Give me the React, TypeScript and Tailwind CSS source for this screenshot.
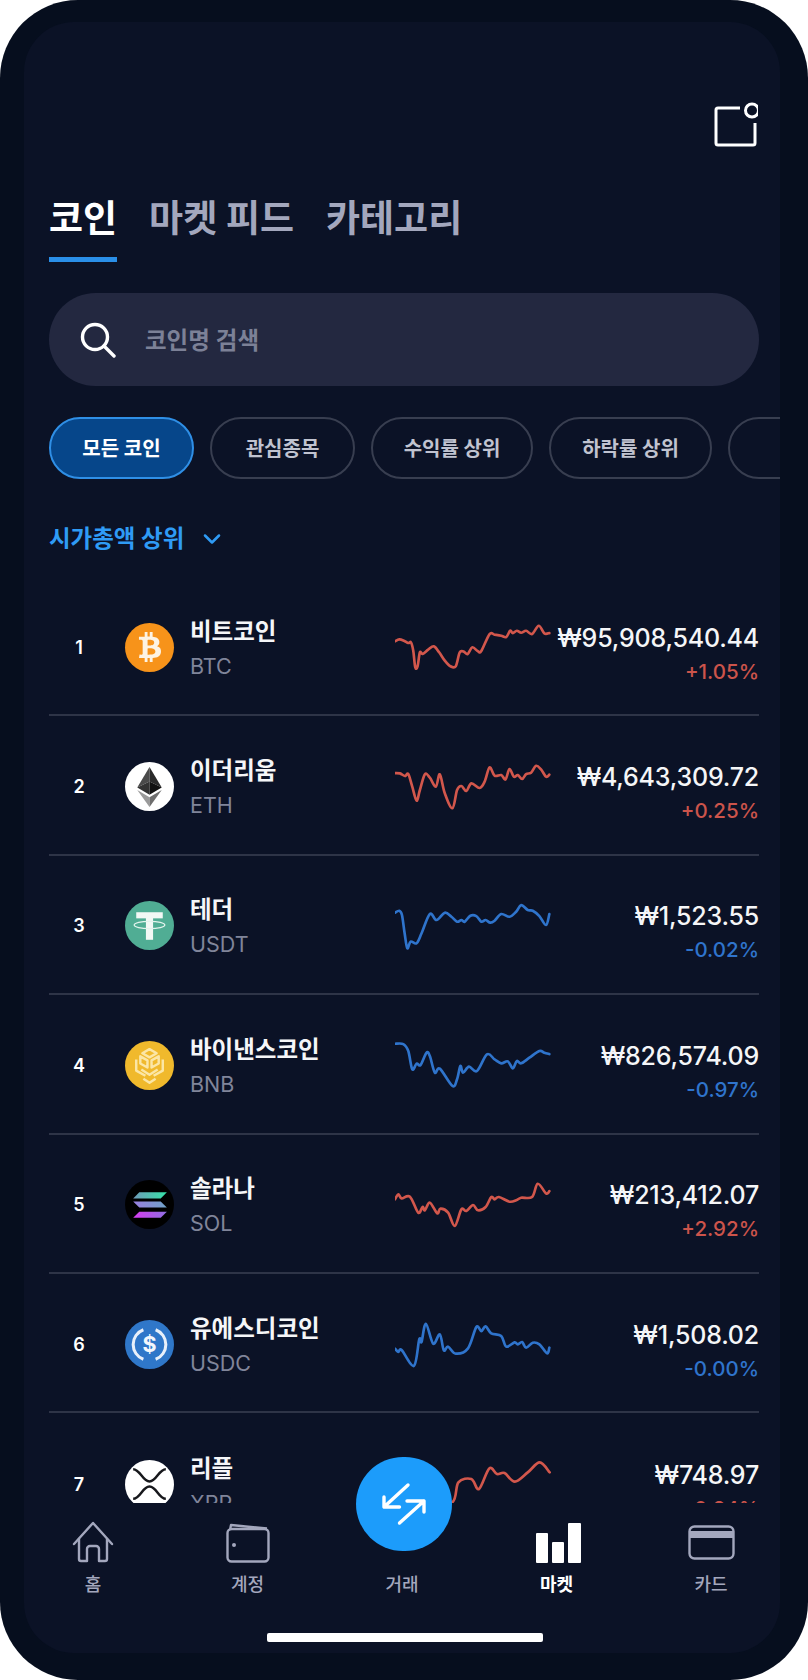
import { ChevronDown } from "lucide-react";
import { FaBtc } from "react-icons/fa";
import type { ReactNode } from "react";

const RED = "#d2574c";
const BLUE = "#2f74cc";

// turn "x,y x,y ..." into a smooth catmull-rom path
function smoothPath(line: string): string {
  const p = line.split(" ").map((s) => s.split(",").map(Number));
  let d = `M${p[0][0]} ${p[0][1]}`;
  for (let i = 0; i < p.length - 1; i++) {
    const a = p[Math.max(i - 1, 0)];
    const b = p[i];
    const c = p[i + 1];
    const e = p[Math.min(i + 2, p.length - 1)];
    const c1x = b[0] + (c[0] - a[0]) / 6;
    const c1y = b[1] + (c[1] - a[1]) / 6;
    const c2x = c[0] - (e[0] - b[0]) / 6;
    const c2y = c[1] - (e[1] - b[1]) / 6;
    d += `C${c1x} ${c1y} ${c2x} ${c2y} ${c[0]} ${c[1]}`;
  }
  return d;
}

function BtcIcon() {
  return (
    <div className="flex h-[49px] w-[49px] items-center justify-center rounded-full bg-[#f7931a]">
      <FaBtc className="h-[30px] w-[30px] text-[#fdf3e3]" />
    </div>
  );
}

function EthIcon() {
  return (
    <svg viewBox="0 0 48 48" className="h-[49px] w-[49px]">
      <circle cx="24" cy="24" r="24" fill="#fff" />
      <polygon points="24,5 12,25 24,19" fill="#4a4a4a" />
      <polygon points="24,5 36,25 24,19" fill="#2a2a2a" />
      <polygon points="12,25 24,19 24,32" fill="#333" />
      <polygon points="36,25 24,19 24,32" fill="#111" />
      <polygon points="12,27.5 24,44 24,34.5" fill="#9a9a9a" />
      <polygon points="36,27.5 24,44 24,34.5" fill="#6e6e6e" />
    </svg>
  );
}

function UsdtIcon() {
  return (
    <svg viewBox="0 0 48 48" className="h-[49px] w-[49px]">
      <circle cx="24" cy="24" r="24" fill="#50ad94" />
      <rect x="11" y="11" width="26" height="6" fill="#f2f8f5" />
      <rect x="20.5" y="15" width="7" height="23" fill="#f2f8f5" />
      <ellipse cx="24" cy="23.5" rx="15" ry="3.6" fill="none" stroke="#e3f3ed" strokeWidth="1.2" />
    </svg>
  );
}

function BnbIcon() {
  return (
    <svg viewBox="0 0 48 48" className="h-[49px] w-[49px]">
      <circle cx="24" cy="24" r="24" fill="#f0b92c" />
      <g fill="none" stroke="#fbe6a6" strokeWidth="2.4" strokeLinejoin="round">
        <polygon points="24,8 31,12 24,16 17,12" />
        <polygon points="15,15 22,19 22,26 15,22" />
        <polygon points="33,15 26,19 26,26 33,22" />
        <polyline points="11,18 11,29 20,34" />
        <polyline points="37,18 37,29 28,34" />
        <polyline points="16,28 24,33 32,28" />
        <polyline points="18,37 24,41 30,37" />
      </g>
    </svg>
  );
}

function SolIcon() {
  return (
    <svg viewBox="0 0 48 48" className="h-[49px] w-[49px]">
      <defs>
        <linearGradient id="sol-a" x1="0" x2="1" y1="0" y2="0">
          <stop offset="0" stopColor="#6f9bb8" />
          <stop offset="1" stopColor="#35e3a8" />
        </linearGradient>
        <linearGradient id="sol-b" x1="0" x2="1" y1="0" y2="0">
          <stop offset="0" stopColor="#9a7fe0" />
          <stop offset="1" stopColor="#6fa3c8" />
        </linearGradient>
        <linearGradient id="sol-c" x1="0" x2="1" y1="0" y2="0">
          <stop offset="0" stopColor="#d63cf0" />
          <stop offset="1" stopColor="#8f6fe0" />
        </linearGradient>
      </defs>
      <circle cx="24" cy="24" r="24" fill="#000" />
      <polygon points="14,12 41,12 35,18 8,18" fill="url(#sol-a)" />
      <polygon points="8,21 35,21 41,27 14,27" fill="url(#sol-b)" />
      <polygon points="14,31 41,31 35,37 8,37" fill="url(#sol-c)" />
    </svg>
  );
}

function UsdcIcon() {
  return (
    <svg viewBox="0 0 48 48" className="h-[49px] w-[49px]">
      <circle cx="24" cy="24" r="24" fill="#2f77c9" />
      <path d="M18 9.5a15.5 15.5 0 0 0 0 29M30 9.5a15.5 15.5 0 0 1 0 29" fill="none" stroke="#e8f0fa" strokeWidth="3" />
      <text x="24" y="31" textAnchor="middle" fontSize="21" fontWeight="700" fill="#f3f7fc" fontFamily="Inter, sans-serif">
        $
      </text>
    </svg>
  );
}

function XrpIcon() {
  return (
    <svg viewBox="0 0 48 48" className="h-[49px] w-[49px]">
      <circle cx="24" cy="24" r="24" fill="#fff" />
      <path
        d="M8 9C15 9 17 21 24 21C31 21 33 9 40 9M8 38C15 38 17 26 24 26C31 26 33 38 40 38"
        fill="none"
        stroke="#17181c"
        strokeWidth="2.4"
      />
    </svg>
  );
}

interface Coin {
  rank: number;
  name: string;
  symbol: string;
  price: string;
  change: string;
  up: boolean;
  cy: number;
  icon: ReactNode;
  line: string;
}

const coins: Coin[] = [
  {
    rank: 1,
    name: "비트코인",
    symbol: "BTC",
    price: "₩95,908,540.44",
    change: "+1.05%",
    up: true,
    cy: 114,
    icon: <BtcIcon />,
    line: "45,97 58,91 72,95 85,102 93,100 100,125 106,175 113,172 120,130 128,135 145,122 162,112 178,130 195,155 212,172 228,172 240,130 252,128 264,135 278,115 295,127 305,126 330,75 345,77 365,80 380,84 392,65 400,72 412,65 425,71 440,65 458,75 478,50 495,73 510,72",
  },
  {
    rank: 2,
    name: "이더리움",
    symbol: "ETH",
    price: "₩4,643,309.72",
    change: "+0.25%",
    up: true,
    cy: 531,
    icon: <EthIcon />,
    line: "45,489 60,490 75,498 85,492 97,530 110,572 120,540 135,493 150,503 168,530 180,493 195,550 218,595 232,540 245,528 260,543 275,520 300,534 315,515 330,472 345,497 365,495 378,508 390,477 403,500 415,495 428,507 440,492 455,488 470,467 485,478 500,500 510,494",
  },
  {
    rank: 3,
    name: "테더",
    symbol: "USDT",
    price: "₩1,523.55",
    change: "-0.02%",
    up: false,
    cy: 108,
    icon: <UsdtIcon />,
    line: "45,68 58,62 66,75 74,130 82,175 92,155 110,160 125,130 150,72 170,90 195,68 215,80 232,95 245,90 255,95 272,77 290,78 305,95 318,90 332,98 345,92 365,72 390,80 410,65 425,45 445,60 460,62 480,78 500,105 510,72",
  },
  {
    rank: 4,
    name: "바이낸스코인",
    symbol: "BNB",
    price: "₩826,574.09",
    change: "-0.97%",
    up: false,
    cy: 527,
    icon: <BnbIcon />,
    line: "45,463 70,464 85,485 97,540 110,523 122,527 140,490 150,500 165,550 180,538 218,590 232,570 242,530 250,550 268,532 292,545 322,495 345,510 365,522 385,516 400,537 412,515 425,522 450,505 480,485 495,490 510,494",
  },
  {
    rank: 5,
    name: "솔라나",
    symbol: "SOL",
    price: "₩213,412.07",
    change: "+2.92%",
    up: true,
    cy: 102,
    icon: <SolIcon />,
    line: "45,85 55,70 65,82 90,77 115,125 128,108 135,118 150,95 172,127 182,113 205,125 225,165 245,115 260,120 280,102 295,118 318,108 335,78 345,85 358,78 390,92 410,88 425,80 458,78 475,38 500,67 510,60",
  },
  {
    rank: 6,
    name: "유에스디코인",
    symbol: "USDC",
    price: "₩1,508.02",
    change: "-0.00%",
    up: false,
    cy: 519,
    icon: <UsdcIcon />,
    line: "45,533 55,543 65,537 102,585 118,505 125,513 138,458 160,518 180,490 192,538 205,527 228,548 265,532 290,468 305,480 318,466 335,487 365,495 380,527 405,514 415,520 428,513 440,530 460,515 480,520 503,547 510,530",
  },
  {
    rank: 7,
    name: "리플",
    symbol: "XRP",
    price: "₩748.97",
    change: "+0.24%",
    up: true,
    cy: 938,
    icon: <XrpIcon />,
    line: "45,970 100,950 150,1000 218,990 236,930 275,920 298,950 329,888 352,905 375,902 406,928 445,900 481,870 511,900",
  },
];

const chips = [
  { label: "모든 코인", width: "w-[145px]", active: true },
  { label: "관심종목", width: "w-[145px]", active: false },
  { label: "수익률 상위", width: "w-[162px]", active: false },
  { label: "하락률 상위", width: "w-[163px]", active: false },
  { label: "", width: "w-[120px]", active: false },
];

function CoinRow({ coin }: { coin: Coin }) {
  return (
    <div className="flex h-[139.4px] shrink-0 items-center border-b-2 border-[#2e3447] last:border-b-0">
      <div className="mt-[3px] w-[60px] text-center text-[18px] font-semibold text-white">{coin.rank}</div>
      <div className="ml-4 mt-[3px] shrink-0">{coin.icon}</div>
      <div className="ml-[16px] mt-[6px] w-[205px]">
        <div className="text-[23.5px] leading-[35px] font-semibold text-[#f5f6f8]">{coin.name}</div>
        <div className="text-[21.5px] leading-[35px] text-[#80859a]">{coin.symbol}</div>
      </div>
      <svg viewBox={`45 ${coin.cy - 90} 470 180`} className="mt-[3px] h-[60px] w-[156px] shrink-0">
        <path
          d={smoothPath(coin.line)}
          fill="none"
          stroke={coin.up ? RED : BLUE}
          strokeWidth="8"
          strokeLinejoin="round"
          strokeLinecap="round"
        />
      </svg>
      <div className="mt-[18px] flex-1 text-right">
        <div className="text-[25px] leading-[33px] font-medium whitespace-nowrap tracking-[-0.2px] text-[#f5f6f8]">{coin.price}</div>
        <div className={`text-[20.5px] leading-[33px] font-medium ${coin.up ? "text-[#cc544b]" : "text-[#2f74cc]"}`}>
          {coin.change}
        </div>
      </div>
    </div>
  );
}

function NavItem({ label, active, children }: { label: string; active?: boolean; children?: ReactNode }) {
  return (
    <div className="flex w-[100px] flex-col items-center">
      <div className="flex h-[62px] items-end pb-[2px]">{children}</div>
      <div className={`mt-[7px] text-[18px] leading-[26px] ${active ? "font-bold text-white" : "font-medium text-[#a3a7bd]"}`}>
        {label}
      </div>
    </div>
  );
}

export default function App() {
  return (
    <div className="h-[1680px] w-[808px] bg-white font-['Inter','Noto_Sans_CJK_KR',sans-serif]">
      <div className="h-full rounded-[78px] bg-[#060e1e] pb-[27px] pl-6 pt-[22px]">
        <div className="relative flex h-full w-[756px] flex-col overflow-hidden rounded-[50px] bg-[#0b1226]">
          {/* Top bar */}
          <div className="flex justify-end pr-[22px] pt-[80px]">
            <svg viewBox="0 0 44 46" className="h-[46px] w-[44px]" fill="none" stroke="#fff" strokeWidth="3">
              <path d="M26 6H4a2 2 0 0 0-2 2V41a2 2 0 0 0 2 2H39a2 2 0 0 0 2-2V21" />
              <circle cx="38" cy="8.5" r="6.5" />
            </svg>
          </div>

          {/* Tabs */}
          <div className="mt-[49px] flex gap-8 pl-[25px] text-[37px] leading-[44px] font-bold text-[#a3a7bd]">
            <div className="text-white">코인</div>
            <div>마켓 피드</div>
            <div>카테고리</div>
          </div>
          <div className="ml-[25px] mt-[16px] h-[5px] w-[68px] bg-[#2a8fe8]" />

          {/* Search */}
          <div className="ml-[25px] mt-[31px] flex h-[93px] w-[710px] items-center rounded-full bg-[#232840] pl-[31px]">
            <svg viewBox="0 0 36 36" className="h-[36px] w-[36px]" fill="none" stroke="#fff" strokeWidth="3.4" strokeLinecap="round">
              <circle cx="15" cy="15" r="12.5" />
              <path d="M24 24L34 34" />
            </svg>
            <div className="ml-[29px] mt-[3px] text-[23.5px] font-semibold text-[#7c8197]">코인명 검색</div>
          </div>

          {/* Filter chips */}
          <div className="ml-[25px] mt-[31px] flex gap-[16px]">
            {chips.map((chip, i) => (
              <div
                key={i}
                className={`flex h-[62px] shrink-0 items-center justify-center rounded-full border-2 pt-[1px] text-[20px] font-bold ${chip.width} ${
                  chip.active ? "border-[#2f8fe6] bg-[#06468a] text-white" : "border-[#383e50] text-[#c0c3d0]"
                }`}
              >
                {chip.label}
              </div>
            ))}
          </div>

          {/* Sort */}
          <div className="ml-[25px] mt-[46px] flex h-[28px] items-center text-[23.5px] font-bold text-[#2f9bf5]">
            시가총액 상위
            <ChevronDown className="ml-[14px] h-[28px] w-[28px]" strokeWidth={2.2} />
          </div>

          {/* Coin list */}
          <div className="ml-[25px] mt-[24px] flex min-h-0 w-[710px] flex-1 flex-col overflow-hidden">
            {coins.map((coin) => (
              <CoinRow key={coin.rank} coin={coin} />
            ))}
          </div>

          {/* Bottom nav */}
          <div className="relative h-[150px] shrink-0">
            <div className="absolute -top-[46px] left-[332px] flex h-[94px] w-[96px] items-center justify-center rounded-full bg-[#1c9cfb]">
              <svg viewBox="0 0 96 94" className="h-[94px] w-[96px]" fill="none" stroke="#fff" strokeWidth="3.4" strokeLinecap="round" strokeLinejoin="round">
                <path d="M52 28L28 50M28 40V50H43.5" />
                <path d="M43.5 66L68 44M51 44H68V55" />
              </svg>
            </div>
            <div className="flex justify-between px-[19px]">
              <NavItem label="홈">
                <svg viewBox="0 0 42 42" className="h-[42px] w-[42px]" fill="none" stroke="#a3a7bd" strokeWidth="2.4" strokeLinejoin="round" strokeLinecap="round">
                  <path d="M2 23L21 2L40 23" />
                  <path d="M7 18V38a2 2 0 0 0 2 2H15V28a3 3 0 0 1 3-3h6a3 3 0 0 1 3 3V40H33a2 2 0 0 0 2-2V18" />
                </svg>
              </NavItem>
              <NavItem label="계정">
                <svg viewBox="0 0 44 40" className="h-[40px] w-[44px]" fill="none" stroke="#a3a7bd" strokeWidth="2.4" strokeLinejoin="round">
                  <path d="M4 7L5 2L41 5.5" />
                  <rect x="1.5" y="6" width="41" height="32.5" rx="4" />
                  <circle cx="8" cy="22" r="2" fill="#a3a7bd" stroke="none" />
                </svg>
              </NavItem>
              <NavItem label="거래" />
              <NavItem label="마켓" active>
                <svg viewBox="0 0 45 40" className="ml-[3px] h-[40px] w-[45px]" fill="#fff">
                  <rect x="0" y="10" width="12" height="30" rx="1" />
                  <rect x="16" y="19" width="12" height="21" rx="1" />
                  <rect x="32" y="0" width="13" height="40" rx="1" />
                </svg>
              </NavItem>
              <NavItem label="카드">
                <svg viewBox="0 0 47 35" className="mb-[3px] h-[35px] w-[47px]" fill="none" stroke="#a3a7bd" strokeWidth="2.4">
                  <rect x="1.5" y="1.5" width="44" height="32" rx="5" />
                  <rect x="1.5" y="6" width="44" height="7" fill="#a3a7bd" stroke="none" />
                </svg>
              </NavItem>
            </div>
            <div className="ml-[243px] mt-[35px] h-[9px] w-[276px] rounded-[2px] bg-white" />
          </div>
        </div>
      </div>
    </div>
  );
}
